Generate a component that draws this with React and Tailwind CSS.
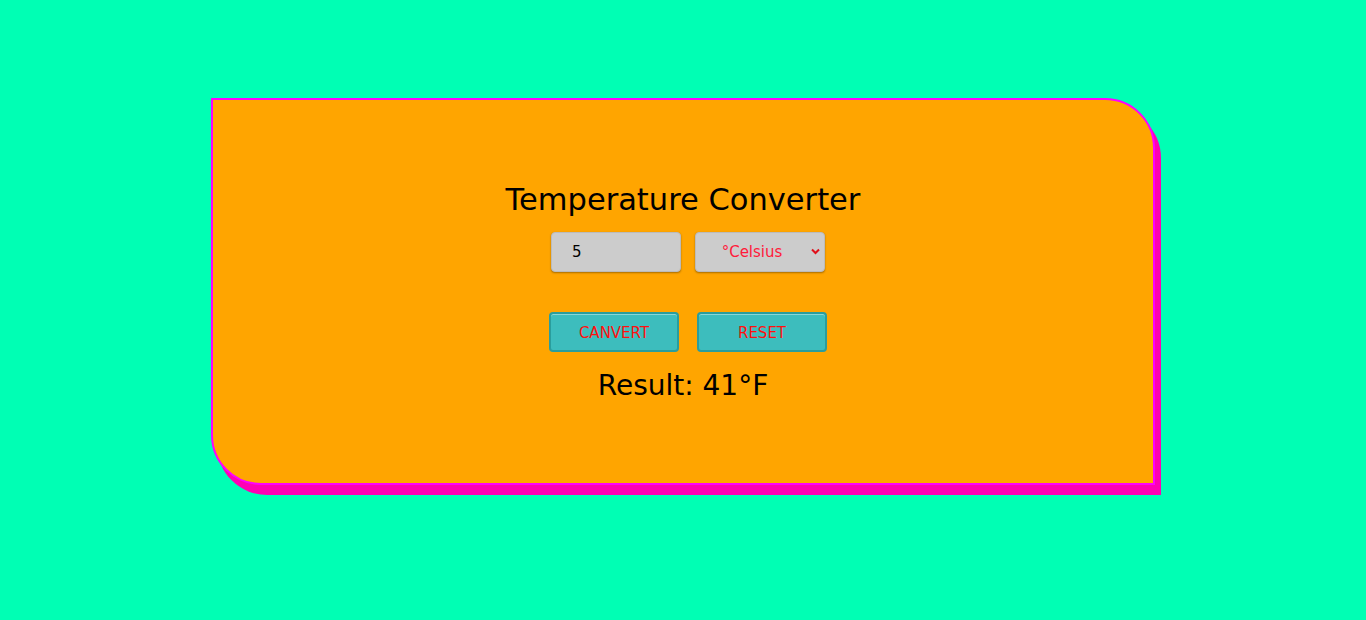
import { useState } from "react";

export default function App() {
    const [value, setValue] = useState("5");
    const [unit, setUnit] = useState("C");

    return (
        <div className="min-h-screen w-full bg-[#00ffb4] pt-[98px] font-['DejaVu_Sans',sans-serif]">
            {/* Card */}
            <div className="mx-auto w-[944px] h-[387px] bg-[#ffa500] border-2 border-[#ff00ff] rounded-tr-[50px] rounded-bl-[50px] shadow-[6px_10px_0_#ff00b4] flex flex-col items-center pt-[82px]">
                <h1 className="text-[30.5px] leading-[36px] text-black">Temperature Converter</h1>

                <div className="flex gap-[14px] mt-[14px] ml-[10px]">
                    <input
                        value={value}
                        onChange={(e) => setValue(e.target.value)}
                        className="w-[130px] h-[40px] bg-[#cccccc] rounded-[4px] border border-[#bbbbbb] shadow-[0_1px_2px_rgba(0,0,0,0.35)] pl-5 text-[15px] text-black outline-none"
                    />
                    <div className="relative w-[130px] h-[40px]">
                        <select
                            value={unit}
                            onChange={(e) => setUnit(e.target.value)}
                            className="appearance-none w-full h-full bg-[#cccccc] rounded-[4px] border border-[#bbbbbb] shadow-[0_1px_2px_rgba(0,0,0,0.35)] text-center text-[15px] text-[#ff1a3a] pr-4 outline-none"
                        >
                            <option value="C">°Celsius</option>
                            <option value="F">°Fahrenheit</option>
                        </select>
                        <svg className="absolute right-[5px] top-[16px] pointer-events-none" width="9" height="7" viewBox="0 0 9 7">
                            <path d="M1 1.5 L4.5 5 L8 1.5" fill="none" stroke="#e0101a" strokeWidth="2" />
                        </svg>
                    </div>
                </div>

                <div className="flex gap-[18px] mt-[40px] ml-[10px]">
                    <button className="w-[130px] h-[40px] pt-[2px] bg-[#3dbdbd] border-2 border-[#2a9d9d] rounded-[4px] shadow-[inset_0_1px_0_rgba(255,255,255,0.4)] text-[15px] text-[#ff1010]">
                        CANVERT
                    </button>
                    <button className="w-[130px] h-[40px] pt-[2px] bg-[#3dbdbd] border-2 border-[#2a9d9d] rounded-[4px] shadow-[inset_0_1px_0_rgba(255,255,255,0.4)] text-[15px] text-[#ff1010]">
                        RESET
                    </button>
                </div>

                <div className="mt-[16px] text-[28px] leading-[36px] text-black">Result: 41°F</div>
            </div>
        </div>
    );
}
